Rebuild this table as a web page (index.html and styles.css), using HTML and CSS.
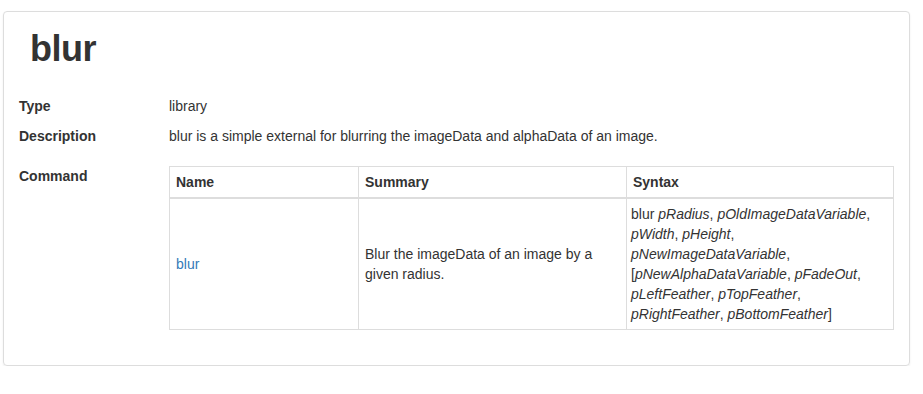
FILE: index.html
```html
<!DOCTYPE html>
<html>
<head>
    <title>blur</title>
    <link rel="stylesheet" href="styles.css">
</head>
<body>
    <div class="panel">
        <h1>blur</h1>
        <dl class="info">
            <dt>Type</dt>
            <dd>library</dd>
            <dt>Description</dt>
            <dd class="desc">blur is a simple external for blurring the imageData and alphaData of an image.</dd>
            <dt>Command</dt>
            <dd>
                <table class="commands">
                    <thead>
                        <tr>
                            <th class="col-name">Name</th>
                            <th class="col-summary">Summary</th>
                            <th>Syntax</th>
                        </tr>
                    </thead>
                    <tbody>
                        <tr>
                            <td><a href="#">blur</a></td>
                            <td>Blur the imageData of an image by a given radius.</td>
                            <td class="syntax">blur <i>pRadius</i>, <i>pOldImageDataVariable</i>, <i>pWidth</i>, <i>pHeight</i>, <i>pNewImageDataVariable</i>, [<i>pNewAlphaDataVariable</i>, <i>pFadeOut</i>, <i>pLeftFeather</i>, <i>pTopFeather</i>, <i>pRightFeather</i>, <i>pBottomFeather</i>]</td>
                        </tr>
                    </tbody>
                </table>
            </dd>
        </dl>
    </div>
</body>
</html>
```

FILE: styles.css
```css
body { margin: 0; padding: 11px 13px 0 3px; font-family: "Liberation Sans", Arial, sans-serif; font-size: 14px; line-height: 20px; color: #333; background: #fff; }
.panel {
    border: 1px solid #ddd; border-radius: 4px;
    box-shadow: 0 1px 2px rgba(0,0,0,.08);
    padding: 17px 15px 35px 15px;
}
h1 { margin: 0 0 27px 11px; font-size: 36px; line-height: 40px; font-weight: bold; letter-spacing: -0.5px; color: #333; }
.info { display: grid; grid-template-columns: 150px 1fr; row-gap: 10px; margin: 0; }
dt { font-weight: bold; }
dd { margin: 0; }
dd.desc { margin-bottom: 10px; }
.commands { width: 100%; border-collapse: collapse; border: 1px solid #ddd; }
.commands th, .commands td { border: 1px solid #ddd; padding: 5px 6px; text-align: left; vertical-align: middle; }
.commands th { font-weight: bold; border-bottom-width: 2px; }
.commands td.syntax { padding-left: 4px; }
.col-name { width: 176px; }
.col-summary { width: 255px; }
a { color: #337ab7; text-decoration: none; }
```
